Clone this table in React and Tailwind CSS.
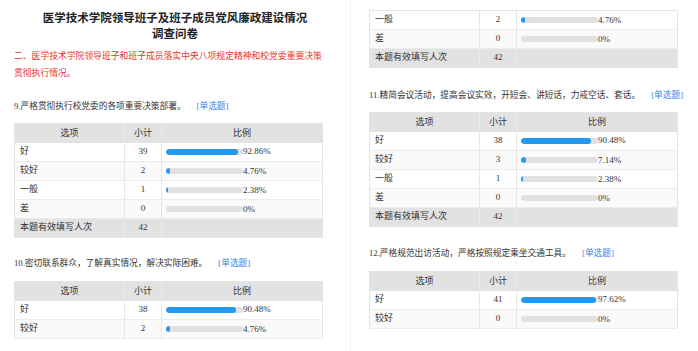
import React from "react";

const font = { fontFamily: '"Liberation Serif", "Noto Sans CJK SC", serif' };

const Bar = ({ pct }) => (
  <div className="flex items-center pl-[4px]">
    <div className="relative w-[77px] h-[6px] rounded-full bg-[#e1e1e1] overflow-hidden">
      {pct > 0 && (
        <div
          className="absolute left-0 top-0 h-full rounded-full bg-[#2399f2]"
          style={{ width: `${Math.max(pct, 2.5)}%` }}
        />
      )}
    </div>
    <span className="text-[9px] text-[#333] leading-none">{pct}%</span>
  </div>
);

const StatTable = ({ rows, total, header = true }) => (
  <table className="w-[308px] table-fixed border-collapse border border-[#e4e4e4] text-[9px] text-[#333]">
    <colgroup>
      <col className="w-[110px]" />
      <col className="w-[37px]" />
      <col className="w-[161px]" />
    </colgroup>
    <tbody>
      {header && (
        <tr className="h-[19px] bg-[#e2e2e2]">
          <td className="text-center border-r border-[#ebebeb]">选项</td>
          <td className="text-center border-r border-[#ebebeb]">小计</td>
          <td className="text-center">比例</td>
        </tr>
      )}
      {rows.map((r, i) => (
        <tr key={r.label} className={`h-[19px] border-b border-[#ececec] ${i % 2 ? "bg-[#fafafa]" : "bg-white"}`}>
          <td className="pl-[5px] border-r border-[#e6e6e6]">{r.label}</td>
          <td className="text-center border-r border-[#e6e6e6]">{r.count}</td>
          <td>
            <Bar pct={r.pct} />
          </td>
        </tr>
      ))}
      {total && (
        <tr className="h-[19px] bg-[#e2e2e2]">
          <td className="pl-[5px] border-r border-[#ebebeb]">本题有效填写人次</td>
          <td className="text-center border-r border-[#ebebeb]">{total}</td>
          <td></td>
        </tr>
      )}
    </tbody>
  </table>
);

const Question = ({ text, className = "" }) => (
  <div className={`text-[8.7px] leading-[17px] text-[#333] whitespace-nowrap ${className}`}>
    {text}
    <span className="ml-[11px] text-[#3b82e6]">[单选题]</span>
  </div>
);

export default function App() {
  return (
    <div className="w-[698px] h-[351px] overflow-hidden bg-white flex" style={font}>
      <div className="w-[351px] shrink-0 h-full border-r border-[#f0f0f0] pl-[14px] pt-[9px]">
        <div
          className="text-center font-bold text-[11.5px] leading-[16px] text-[#222] pr-[14px]"
          style={{ fontFamily: '"Noto Sans CJK SC", sans-serif' }}
        >
          <div>医学技术学院领导班子及班子成员党风廉政建设情况</div>
          <div>调查问卷</div>
        </div>
        <div className="mt-[7px] text-[8.8px] leading-[17px] text-[#e8352d] pr-[20px]">
          二、医学技术学院领导班子和班子成员落实中央八项规定精神和校党委重要决策贯彻执行情况。
        </div>
        <Question className="mt-[16px]" text="9.严格贯彻执行校党委的各项重要决策部署。" />
        <div className="mt-[8px]">
          <StatTable
            rows={[
              { label: "好", count: 39, pct: 92.86 },
              { label: "较好", count: 2, pct: 4.76 },
              { label: "一般", count: 1, pct: 2.38 },
              { label: "差", count: 0, pct: 0 },
            ]}
            total={42}
          />
        </div>
        <Question className="mt-[17px]" text="10.密切联系群众，了解真实情况，解决实际困难。" />
        <div className="mt-[9px]">
          <StatTable
            rows={[
              { label: "好", count: 38, pct: 90.48 },
              { label: "较好", count: 2, pct: 4.76 },
            ]}
          />
        </div>
      </div>

      <div className="flex-1 h-full pl-[18px] pt-[10px]">
        <StatTable
          header={false}
          rows={[
            { label: "一般", count: 2, pct: 4.76 },
            { label: "差", count: 0, pct: 0 },
          ]}
          total={42}
        />
        <Question className="mt-[19px]" text="11.精简会议活动，提高会议实效，开短会、讲短话，力戒空话、套话。" />
        <div className="mt-[8px]">
          <StatTable
            rows={[
              { label: "好", count: 38, pct: 90.48 },
              { label: "较好", count: 3, pct: 7.14 },
              { label: "一般", count: 1, pct: 2.38 },
              { label: "差", count: 0, pct: 0 },
            ]}
            total={42}
          />
        </div>
        <Question className="mt-[18px]" text="12.严格规范出访活动，严格按照规定乘坐交通工具。" />
        <div className="mt-[9px]">
          <StatTable
            rows={[
              { label: "好", count: 41, pct: 97.62 },
              { label: "较好", count: 0, pct: 0 },
            ]}
          />
        </div>
      </div>
    </div>
  );
}
